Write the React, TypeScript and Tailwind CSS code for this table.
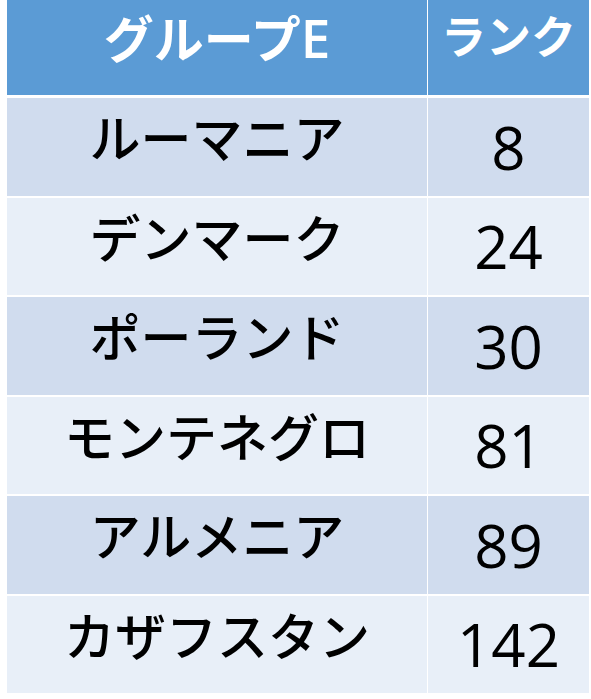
const rows = [
  { name: 'ルーマニア', rank: '8' },
  { name: 'デンマーク', rank: '24' },
  { name: 'ポーランド', rank: '30' },
  { name: 'モンテネグロ', rank: '81' },
  { name: 'アルメニア', rank: '89' },
  { name: 'カザフスタン', rank: '142' },
]

const jp = "font-['Noto_Sans_CJK_JP',sans-serif]"
const num = "font-['Open_Sans',sans-serif]"

export default function App() {
  return (
    <div className="w-[591px] h-[699px] bg-white pl-[7px] pr-[2px] overflow-hidden">
      <div className="grid grid-cols-[420px_1fr] gap-x-[1px]">
        {/* Header */}
        <div className="h-[95px] bg-[#5b9bd5] flex justify-center items-start pt-[4px]">
          <p className="flex items-baseline text-white leading-[1.3]">
            <span className={`${jp} text-[50px] font-bold`}>グループ</span>
            <span className={`${num} text-[53px] font-semibold`}>E</span>
          </p>
        </div>
        <div className="h-[95px] bg-[#5b9bd5] flex justify-center items-start pt-[6px]">
          <p className={`${jp} text-[45px] leading-[1.3] font-bold text-white`}>ランク</p>
        </div>
      </div>

      <div className="mt-[3px] flex flex-col gap-y-[2px]">
        {rows.map((row, idx) => (
          <div key={idx} className="grid grid-cols-[420px_1fr] gap-x-[1px]">
            <div
              className={`h-[97.5px] flex items-center justify-center pb-[20px] ${jp} ${
                idx % 2 === 0 ? 'bg-[#d0dcee]' : 'bg-[#e8eff8]'
              }`}
            >
              <span className="text-[51px] leading-[1.2] font-medium text-black">{row.name}</span>
            </div>
            <div
              className={`h-[97.5px] flex items-center justify-center ${num} ${
                idx % 2 === 0 ? 'bg-[#d0dcee]' : 'bg-[#e8eff8]'
              }`}
            >
              <span className="text-[60px] leading-[1.2] text-black">{row.rank}</span>
            </div>
          </div>
        ))}
      </div>
    </div>
  )
}
